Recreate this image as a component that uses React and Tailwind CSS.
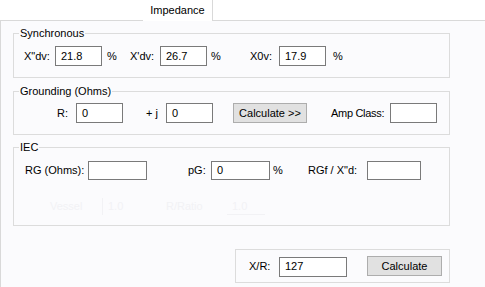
const font = { fontFamily: '"Liberation Sans", Arial, sans-serif' };

function Box({ className = "" }) {
  return <div className={"shrink-0 h-[20px] border border-[#7a7a7a] bg-white " + className} />;
}

function Input({ value, className = "" }) {
  return (
    <div className={"shrink-0 flex items-center pl-[5px] border border-[#7a7a7a] bg-white text-black " + className}>
      {value}
    </div>
  );
}

function Button({ children, className = "" }) {
  return (
    <div className={"shrink-0 h-[20px] flex items-center justify-center border border-[#adadad] bg-[#e1e1e1] text-black " + className}>
      {children}
    </div>
  );
}

function Group({ title, className = "", children }) {
  return (
    <div className={"relative w-[437px] border border-[#dcdcdc] " + className}>
      {title && (
        <span className="absolute -top-[8px] left-[5px] px-[1px] leading-[14px] bg-[#fbfbfd] text-black">
          {title}
        </span>
      )}
      {children}
    </div>
  );
}

export default function App() {
  return (
    <div className="w-[485px] h-[287px] overflow-hidden bg-white text-[11px] leading-none whitespace-nowrap" style={font}>
      {/* tab strip */}
      <div className="h-[20px] flex relative z-10">
        <div className="ml-[143px] w-[70px] h-[21px] flex items-center justify-center bg-white border-r border-[#d9d9d9] text-black">
          Impedance
        </div>
      </div>

      {/* tab page */}
      <div className="h-[267px] border-l border-t border-[#d9d9d9] bg-[#fbfbfd] pl-[12px] pt-[12px] flex flex-col">
        <Group title="Synchronous" className="h-[45px] pt-[12px]">
          <div className="flex items-center">
            <span className="ml-[10px] w-[31px]">X"dv:</span>
            <Input value="21.8" className="w-[47px] h-[20px]" />
            <span className="ml-[5px] w-[23px]">%</span>
            <span className="w-[30px]">X'dv:</span>
            <Input value="26.7" className="w-[47px] h-[20px]" />
            <span className="ml-[4px] w-[39px]">%</span>
            <span className="w-[29px]">X0v:</span>
            <Input value="17.9" className="w-[47px] h-[20px]" />
            <span className="ml-[7px]">%</span>
          </div>
        </Group>

        <Group title="Grounding (Ohms)" className="mt-[13px] h-[44px] pt-[11px]">
          <div className="flex items-center">
            <span className="ml-[43px] w-[19px]">R:</span>
            <Input value="0" className="w-[47px] h-[20px]" />
            <span className="ml-[23px] w-[20px]">+ j</span>
            <Input value="0" className="w-[47px] h-[20px]" />
            <Button className="ml-[20px] w-[74px]">Calculate &gt;&gt;</Button>
            <span className="ml-[24px] w-[59px] tracking-[-0.3px]">Amp Class:</span>
            <Box className="w-[47px]" />
          </div>
        </Group>

        <Group title="IEC" className="mt-[12px] h-[79px] pt-[13px]">
          <div className="flex items-center">
            <span className="ml-[11px] w-[63px]">RG (Ohms):</span>
            <Input value="" className="w-[59px] h-[19px]" />
            <span className="ml-[41px] w-[23px]">pG:</span>
            <Input value="0" className="w-[59px] h-[19px]" />
            <span className="ml-[3px] w-[35px]">%</span>
            <span className="w-[59px]">RGf / X"d:</span>
            <Input value="" className="w-[54px] h-[19px]" />
          </div>
          {/* disabled, nearly invisible row */}
          <div className="mt-[18px] flex items-center text-[#f2f2f5]">
            <span className="ml-[36px] w-[52px]">Vessel</span>
            <div className="w-[64px] h-[17px] border-l border-[#f2f2f5] pl-[5px] flex items-center">1.0</div>
            <span className="w-[61px]">R/Ratio</span>
            <div className="w-[38px] h-[17px] border-b border-[#f2f2f5] pl-[5px] flex items-center">1.0</div>
          </div>
        </Group>

        <div className="w-[437px] flex justify-end mt-[23px]">
          <div className="w-[215px] h-[34px] border border-[#dcdcdc] flex items-center">
            <span className="ml-[13px] w-[30px]">X/R:</span>
            <Input value="127" className="w-[68px] h-[20px] mt-[1px]" />
            <Button className="ml-[20px] w-[75px]">Calculate</Button>
          </div>
        </div>
      </div>
    </div>
  );
}
